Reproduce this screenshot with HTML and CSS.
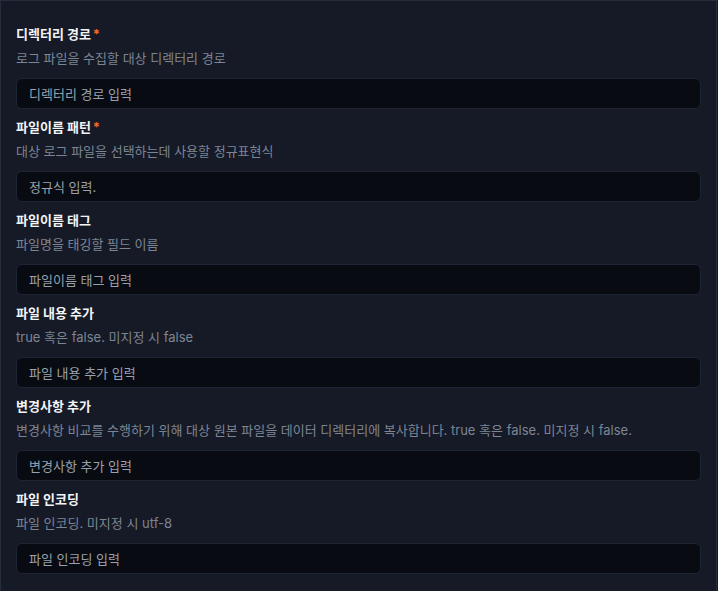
FILE: index.html
```html
<!DOCTYPE html>
<html lang="ko">
<head>
<meta charset="utf-8">
<link rel="stylesheet" href="styles.css">
</head>
<body>
<div class="card">
  <div class="field">
    <div class="label">디렉터리 경로<span class="req">*</span></div>
    <div class="desc">로그 파일을 수집할 대상 디렉터리 경로</div>
    <input class="input" type="text" placeholder="디렉터리 경로 입력">
  </div>
  <div class="field">
    <div class="label">파일이름 패턴<span class="req">*</span></div>
    <div class="desc">대상 로그 파일을 선택하는데 사용할 정규표현식</div>
    <input class="input" type="text" placeholder="정규식 입력.">
  </div>
  <div class="field">
    <div class="label">파일이름 태그</div>
    <div class="desc">파일명을 태깅할 필드 이름</div>
    <input class="input" type="text" placeholder="파일이름 태그 입력">
  </div>
  <div class="field">
    <div class="label">파일 내용 추가</div>
    <div class="desc">true 혹은 false. 미지정 시 false</div>
    <input class="input" type="text" placeholder="파일 내용 추가 입력">
  </div>
  <div class="field">
    <div class="label">변경사항 추가</div>
    <div class="desc">변경사항 비교를 수행하기 위해 대상 원본 파일을 데이터 디렉터리에 복사합니다. true 혹은 false. 미지정 시 false.</div>
    <input class="input" type="text" placeholder="변경사항 추가 입력">
  </div>
  <div class="field">
    <div class="label">파일 인코딩</div>
    <div class="desc">파일 인코딩. 미지정 시 utf-8</div>
    <input class="input" type="text" placeholder="파일 인코딩 입력">
  </div>
</div>
</body>
</html>
```
FILE: styles.css
```css
html, body {
  margin: 0;
  padding: 0;
  background: #151a26;
}
body {
  font-family: "Inter", "Noto Sans CJK KR", sans-serif;
  width: 718px;
  height: 591px;
  overflow: hidden;
}
.card {
  width: 717px;
  box-sizing: border-box;
  border: 1px solid #252c3c;
  border-bottom: none;
  background: #151a26;
  padding: 23px 15px 20px 15px;
  min-height: 591px;
}
.field {
  display: flex;
  flex-direction: column;
  margin-bottom: 8px;
}
.label {
  font-size: 13px;
  font-weight: 700;
  line-height: 20px;
  color: #f3f4f6;
  margin-bottom: 4px;
}
.req {
  color: #f26b2a;
  margin-left: 2px;
}
.desc {
  font-size: 13px;
  line-height: 20px;
  color: #7d8594;
  margin-bottom: 10px;
  white-space: nowrap;
}
.input {
  height: 31px;
  box-sizing: border-box;
  background: #080b12;
  border: 1px solid #1d2433;
  border-radius: 6px;
  padding: 0 12px;
  font-family: "Inter", "Noto Sans CJK KR", sans-serif;
  font-size: 13px;
  color: #d1d5db;
  outline: none;
  margin: 0;
}
.input::placeholder {
  color: #9aa1ad;
}
```
